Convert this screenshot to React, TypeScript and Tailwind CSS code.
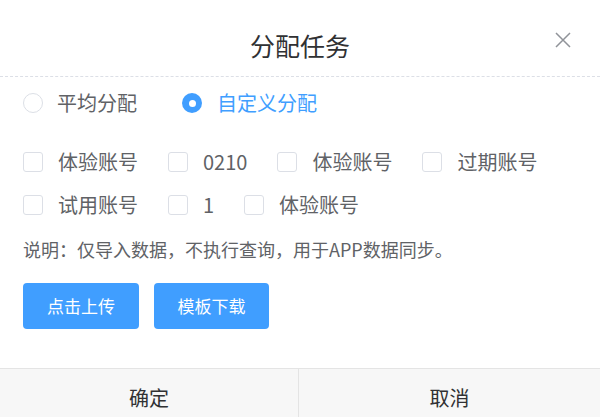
import React from 'react';

const accounts = [
  ['体验账号', '0210', '体验账号', '过期账号'],
  ['试用账号', '1', '体验账号'],
];

const Checkbox: React.FC<{ label: string }> = ({ label }) => (
  <label className="flex items-center mr-[30px] cursor-pointer">
    <span className="w-5 h-5 border border-[#dcdfe6] rounded-[3px] bg-white" />
    <span className="ml-[15px] text-[20px] leading-none text-[#606266]">{label}</span>
  </label>
);

const App: React.FC = () => {
  return (
    <div
      className="w-[600px] h-[417px] overflow-hidden bg-white"
      style={{ fontFamily: '"Noto Sans CJK SC", "Noto Sans", sans-serif' }}
    >
      <div className="relative pt-[20px] pb-[6px] border-b border-dashed border-[#dcdfe6] flex justify-center">
        <h1 className="text-[25px] leading-[50px] text-[#303133] font-normal">分配任务</h1>
        <button className="absolute top-[32px] right-[29px] text-[#909399]">
          <svg width="16" height="16" viewBox="0 0 16 16" fill="none" stroke="currentColor" strokeWidth="1.5">
            <path d="M1 1L15 15M15 1L1 15" />
          </svg>
        </button>
      </div>

      <div className="px-[23px]">
        <div className="mt-[16px] h-5 flex items-center">
          <label className="flex items-center cursor-pointer">
            <span className="w-5 h-5 rounded-full border border-[#dcdfe6] bg-white" />
            <span className="ml-[14px] text-[20px] leading-none text-[#606266]">平均分配</span>
          </label>
          <label className="flex items-center ml-[45px] cursor-pointer">
            <span className="w-5 h-5 rounded-full bg-[#409eff] flex items-center justify-center">
              <span className="w-[7px] h-[7px] rounded-full bg-white" />
            </span>
            <span className="ml-[15px] text-[20px] leading-none text-[#409eff]">自定义分配</span>
          </label>
        </div>

        <div className="mt-[39px] flex flex-col gap-[23px]">
          {accounts.map((row, i) => (
            <div key={i} className="h-5 flex items-center">
              {row.map((name, j) => (
                <Checkbox key={j} label={name} />
              ))}
            </div>
          ))}
        </div>

        <p className="mt-[24px] text-[18px] leading-[20px] text-[#606266]">
          说明：仅导入数据，不执行查询，用于APP数据同步。
        </p>

        <div className="mt-[24px] flex gap-[15px]">
          <button className="w-[116px] h-[46px] rounded-[4px] bg-[#409eff] text-white text-[17px]">
            点击上传
          </button>
          <button className="w-[115px] h-[46px] rounded-[4px] bg-[#409eff] text-white text-[17px]">
            模板下载
          </button>
        </div>
      </div>

      <div className="mt-[39px] border-t border-[#e4e4e4] bg-[#f7f7f7] flex h-[58px]">
        <button className="w-[299px] border-r border-[#e4e4e4] text-[20px] text-[#303133]">确定</button>
        <button className="flex-1 text-[20px] text-[#303133]">取消</button>
      </div>
    </div>
  );
};

export default App;
